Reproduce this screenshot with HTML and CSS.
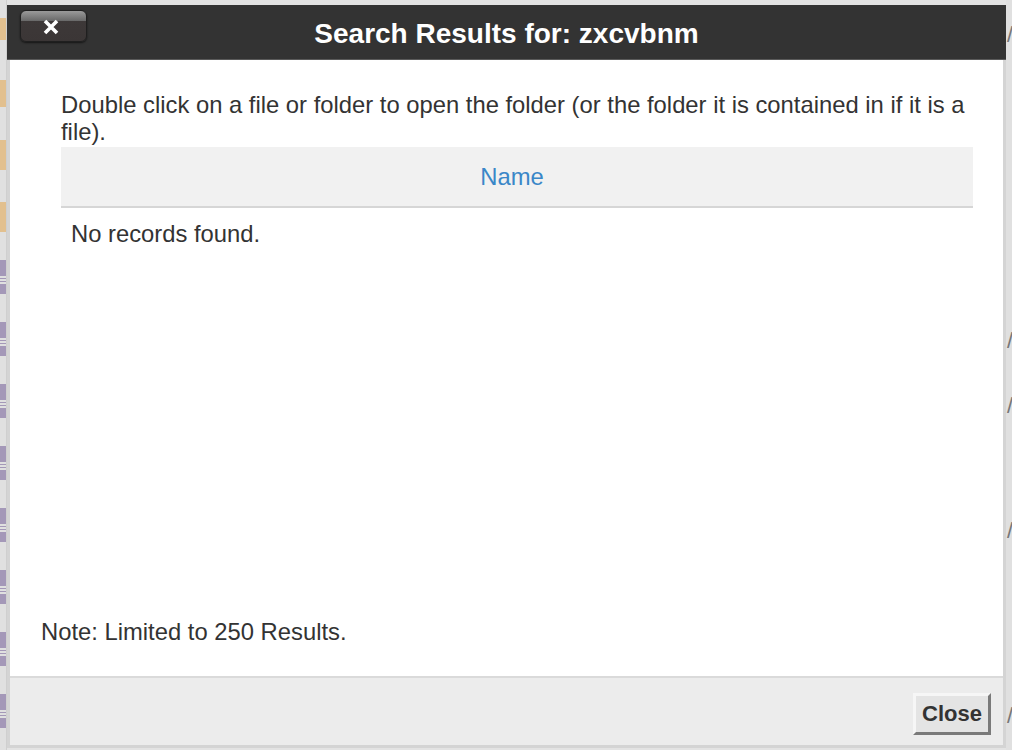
FILE: index.html
```html
<!DOCTYPE html>
<html lang="en">
<head>
    <meta charset="UTF-8">
    <meta name="viewport" content="width=device-width, initial-scale=1.0">
    <title>Search Results</title>
    <link rel="stylesheet" href="styles.css">
</head>
<body>
    <div class="page">
        <div class="side side-left"></div>

        <div class="dialog">
            <div class="titlebar">
                <button class="x-btn" title="Close">
                    <svg width="16" height="16" viewBox="0 0 16 16">
                        <path d="M2 2 L14 14 M14 2 L2 14" stroke="#fff" stroke-width="3.6" stroke-linecap="butt"/>
                    </svg>
                </button>
                <h1 class="title">Search Results for: zxcvbnm</h1>
            </div>

            <div class="dialog-main">
                <div class="content">
                    <div class="results">
                        <p class="hint">Double click on a file or folder to open the folder (or the folder it is contained in if it is a file).</p>
                        <table class="grid">
                            <thead>
                                <tr><th>Name</th></tr>
                            </thead>
                            <tbody>
                                <tr><td>No records found.</td></tr>
                            </tbody>
                        </table>
                    </div>
                    <p class="note">Note: Limited to 250 Results.</p>
                </div>

                <div class="footer">
                    <button class="close-btn">Close</button>
                </div>
            </div>
        </div>

        <div class="side side-right">
            <span class="slash s1">/</span>
            <span class="slash s2">/</span>
            <span class="slash s3">/</span>
            <span class="slash s4">/</span>
            <span class="slash s5">/</span>
        </div>
    </div>
</body>
</html>
```

FILE: styles.css
```css
html, body {
    margin: 0;
    padding: 0;
}
body {
    font-family: "Liberation Sans", Arial, sans-serif;
    background: #e3e3e3;
    width: 1012px;
    height: 750px;
    overflow: hidden;
}
.page {
    display: flex;
    height: 750px;
}
.side {
    position: relative;
}
.side-left {
    width: 7px;
    background:
        linear-gradient(to bottom,
            transparent 0, transparent 18px,
            #e2c08f 18px, #e2c08f 40px,
            transparent 40px, transparent 80px,
            #e2c08f 80px, #e2c08f 107px,
            transparent 107px, transparent 140px,
            #e2c08f 140px, #e2c08f 170px,
            transparent 170px, transparent 202px,
            #e2c08f 202px, #e2c08f 232px,
            transparent 232px),
        repeating-linear-gradient(to bottom,
            #a498b8 0, #a498b8 16px,
            #e0e0e0 16px, #e0e0e0 18px,
            #a498b8 18px, #a498b8 19px,
            #e0e0e0 19px, #e0e0e0 21px,
            #a498b8 21px, #a498b8 22px,
            #e0e0e0 22px, #e0e0e0 24px,
            #a498b8 24px, #a498b8 34px,
            #e0e0e0 34px, #e0e0e0 62px) 0 260px / 7px 490px no-repeat,
        #e0e0e0;
    border-right: 1px solid #cfcfcf;
    box-sizing: border-box;
}
.side-right {
    width: 6px;
    background: #e0e0e0;
}
.slash {
    position: absolute;
    left: 1px;
    font-size: 22px;
    color: #777;
    line-height: 22px;
}
.s1 { top: 24px; }
.s2 { top: 330px; }
.s3 { top: 395px; }
.s4 { top: 520px; }
.s5 { top: 705px; }

.dialog {
    width: 999px;
    margin-top: 5px;
    height: 743px;
    display: flex;
    flex-direction: column;
}
.titlebar {
    height: 54px;
    background: #333333;
    border-bottom: 1px solid #5a5a5a;
    display: flex;
    align-items: center;
    position: relative;
}
.x-btn {
    position: absolute;
    left: 13px;
    top: 5px;
    width: 67px;
    height: 32px;
    border: 1px solid #1f1f1f;
    border-radius: 6px;
    background: linear-gradient(to bottom, #9a9a9a 0, #6a6a6a 32%, #3d3838 33%, #3b3636 100%);
    box-shadow: 0 1px 2px rgba(0, 0, 0, 0.6);
    display: flex;
    align-items: center;
    justify-content: center;
    padding: 2px 6px 0 0;
    cursor: pointer;
}
.title {
    flex: 1;
    margin: 0;
    text-align: center;
    color: #fff;
    font-size: 28px;
    font-weight: bold;
    padding-top: 4px;
}

.dialog-main {
    flex: 1;
    display: flex;
    flex-direction: column;
    border: 3px solid #d4d4d4;
    border-top: 0;
    background: #fff;
}
.content {
    flex: 1;
    padding: 31px 30px 0 31px;
    display: flex;
    flex-direction: column;
    color: #333;
    font-size: 23.8px;
}
.results {
    flex: 1;
    padding-left: 20px;
}
.hint {
    margin: 0;
    line-height: 27px;
}
.grid {
    width: 100%;
    border-collapse: collapse;
    margin-top: 2px;
}
.grid th {
    background: #f1f1f1;
    color: #3a87c8;
    font-weight: normal;
    height: 59px;
    border-bottom: 2px solid #d6d6d6;
    padding: 0 10px 0 0;
}
.grid td {
    padding: 12px 10px;
}
.note {
    margin: 0 0 30px;
}
.footer {
    height: 67px;
    background: #ececec;
    border-top: 2px solid #dadada;
    display: flex;
    justify-content: flex-end;
    align-items: center;
    padding-right: 12px;
}
.close-btn {
    width: 78px;
    height: 42px;
    margin-top: 4px;
    background: #e4e4e4;
    border: 3px solid;
    border-color: #f6f6f6 #7a7a7a #7a7a7a #f6f6f6;
    font-family: "Liberation Sans", Arial, sans-serif;
    font-weight: bold;
    font-size: 22px;
    color: #333;
    padding: 0;
    cursor: pointer;
}
```
